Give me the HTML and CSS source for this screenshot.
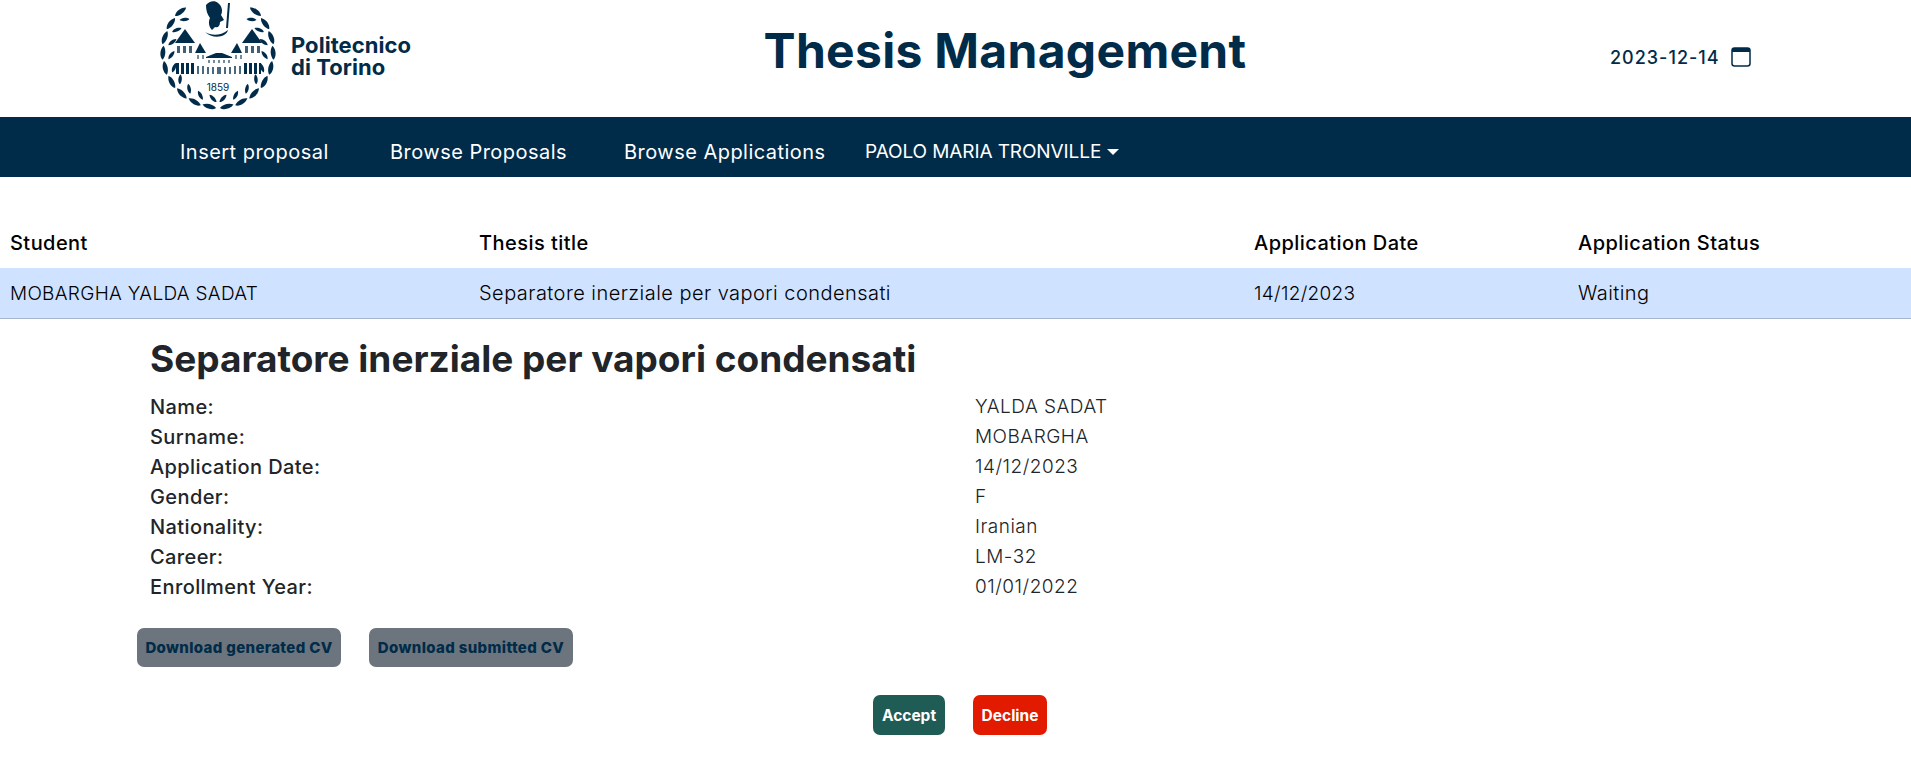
FILE: index.html
```html
<!DOCTYPE html>
<html><head><meta charset="utf-8"><title>Thesis Management</title>
<link rel="stylesheet" href="styles.css">
</head><body>
<header class="top">
   <div class="logo">
      <svg class="crest" width="120" height="112" viewBox="0 0 120 112">
         <defs>
            <path id="leaf" d="M0 0C3-3 10-4 14-1C10 3 3 3 0 0Z"/>
            <g id="right">
               <use href="#leaf" transform="translate(56 108) rotate(-6)"/>
               <use href="#leaf" transform="translate(56 102) rotate(-38) scale(.72)"/>
            </g>
            <g id="left" transform="translate(116 0) scale(-1 1)"><use href="#right"/></g>
         </defs>
         <g class="ink">
            <use href="#right" transform="rotate(-4 58 52)"/>
            <use href="#right" transform="rotate(-20 58 52)"/>
            <use href="#right" transform="rotate(-36 58 52)"/>
            <use href="#right" transform="rotate(-52 58 52)"/>
            <use href="#right" transform="rotate(-68 58 52)"/>
            <use href="#right" transform="rotate(-84 58 52)"/>
            <use href="#right" transform="rotate(-100 58 52)"/>
            <use href="#right" transform="rotate(-116 58 52)"/>
            <use href="#right" transform="rotate(-132 58 52)"/>
            <use href="#left" transform="rotate(4 58 52)"/>
            <use href="#left" transform="rotate(20 58 52)"/>
            <use href="#left" transform="rotate(36 58 52)"/>
            <use href="#left" transform="rotate(52 58 52)"/>
            <use href="#left" transform="rotate(68 58 52)"/>
            <use href="#left" transform="rotate(84 58 52)"/>
            <use href="#left" transform="rotate(100 58 52)"/>
            <use href="#left" transform="rotate(116 58 52)"/>
            <use href="#left" transform="rotate(132 58 52)"/>
            <!-- head and helmet -->
            <path d="M46 5C49 1 55 0 58 3C62 6 63 11 61 15L64 20L60 22C60 26 58 28 55 27L52 30C49 27 48 22 50 18C47 14 46 10 46 5Z"/>
            <path d="M68 3L70 3L68 28L66 28Z"/>
            <path d="M45 32C52 36 60 36 68 30C66 38 52 39 45 32Z"/>
            <!-- towers -->
            <path d="M15 43L25 29L35 43Z"/>
            <path d="M82 43L92 29L102 43Z"/>
            <path d="M35 53L40 43L46 53Z"/>
            <path d="M71 53L77 43L82 53Z"/>
            <path d="M46 57L56 53H62L72 57V58H46Z"/>
            <!-- windows -->
            <path d="M17 46h3v7h-3zM23 46h3v7h-3zM29 46h3v7h-3zM85 46h3v7h-3zM91 46h3v7h-3zM97 46h3v7h-3z" opacity=".75"/>
            <path d="M37 55h2v4h-2zM42 55h2v4h-2zM75 55h2v4h-2zM80 55h2v4h-2zM48 60h2v3h-2zM53 60h2v3h-2zM58 60h2v3h-2zM63 60h2v3h-2zM68 60h2v3h-2z" opacity=".55"/>
            <!-- ground floor columns -->
            <path d="M16 63h3v11h-3zM21 63h3v11h-3zM26 63h3v11h-3zM31 63h3v11h-3zM84 63h3v11h-3zM89 63h3v11h-3zM94 63h3v11h-3zM99 63h2v11h-2z"/>
            <path d="M37 66h2v8h-2zM42 66h2v8h-2zM47 67h2v7h-2zM52 67h2v7h-2zM57 67h4v7h-4zM64 67h2v7h-2zM69 67h2v7h-2zM74 66h2v8h-2zM79 66h2v8h-2z" opacity=".7"/>
         </g>
         <text class="year" x="58" y="91">1859</text>
      </svg>
      <div class="wordmark">Politecnico<br>di Torino</div>
   </div>
   <h1 class="title">Thesis Management</h1>
   <div class="today">
      <span>2023-12-14</span>
      <svg width="20" height="20" viewBox="0 0 20 20">
         <rect x="1" y="1" width="18" height="18" rx="2.5" class="cal-line"/>
         <path d="M1 5V3.5A2.5 2.5 0 0 1 3.500 1h13A2.500 2.500 0 0 1 19 3.500V5Z" class="ink"/>
      </svg>
   </div>
</header>
<nav class="bar">
   <a class="item first">Insert proposal</a>
   <a class="item second">Browse Proposals</a>
   <a class="item third">Browse Applications</a>
   <a class="item user">PAOLO MARIA TRONVILLE<i class="caret"></i></a>
</nav>
<table class="apps">
   <colgroup><col class="c1"><col class="c2"><col class="c3"><col></colgroup>
   <thead><tr><th>Student</th><th>Thesis title</th><th>Application Date</th><th>Application Status</th></tr></thead>
   <tbody><tr><td class="caps">MOBARGHA YALDA SADAT</td><td>Separatore inerziale per vapori condensati</td><td class="caps">14/12/2023</td><td>Waiting</td></tr></tbody>
</table>
<section class="detail">
   <h2>Separatore inerziale per vapori condensati</h2>
   <dl class="facts">
      <dt>Name:</dt><dd>YALDA SADAT</dd>
      <dt>Surname:</dt><dd>MOBARGHA</dd>
      <dt>Application Date:</dt><dd>14/12/2023</dd>
      <dt>Gender:</dt><dd>F</dd>
      <dt>Nationality:</dt><dd>Iranian</dd>
      <dt>Career:</dt><dd>LM-32</dd>
      <dt>Enrollment Year:</dt><dd>01/01/2022</dd>
   </dl>
</section>
<div class="downloads">
   <button class="btn grey">Download generated CV</button>
   <button class="btn grey">Download submitted CV</button>
</div>
<div class="actions">
   <button class="btn accept">Accept</button>
   <button class="btn decline">Decline</button>
</div>
</body></html>
```
FILE: styles.css
```css
body
{
	margin: 0;
	font-family: Inter, "Open Sans", sans-serif;
	color: #212529;
	background-color: #fff;
}
.top
{
	display: grid;
	grid-template-columns: 410px 1190px 1fr;
	align-items: center;
	height: 117px;
	color: #002b49;
}
.logo { display: flex; align-items: center; padding-left: 160px; height: 117px; }
.crest { flex: none; margin-top: -5px; }
.ink { fill: #002b49; }
.year { fill: #002b49; font-size: 10px; text-anchor: middle; }
.wordmark
{
	margin: -6px 0 0 11px;
	font-size: 22px;
	line-height: 22px;
	font-weight: 700;
	letter-spacing: .05px;
}
.title { margin: 0 0 16px; text-align: center; font-size: 48px; font-weight: 700; letter-spacing: .3px; }
.today { display: flex; align-items: center; gap: 11px; padding: 0 0 3px 10px; font-size: 18px; font-weight: 500; letter-spacing: 1px; }
.cal-line { fill: none; stroke: #002b49; stroke-width: 1.5; }
.bar
{
	display: flex;
	align-items: center;
	height: 51px;
	padding: 9px 0 0 180px;
	color: #fff;
	background-color: #002b49;
	font-size: 20px;
	letter-spacing: .47px;
}
.item { white-space: nowrap; }
.first { width: 210px; }
.second { width: 234px; }
.third { width: 241px; }
.user { font-size: 19px; letter-spacing: -.1px; }
.caret
{
	display: inline-block;
	margin-left: 6px;
	vertical-align: 3px;
	border-top: 6px solid #fff;
	border-left: 6px solid transparent;
	border-right: 6px solid transparent;
}
.apps
{
	width: 100%;
	margin-top: 40px;
	border-collapse: collapse;
	table-layout: fixed;
	font-size: 20px;
	letter-spacing: .45px;
}
.c1 { width: 469px; }
.c2 { width: 775px; }
.c3 { width: 324px; }
.apps th
{
	height: 51px;
	padding: 0 10px;
	text-align: left;
	font-weight: 500;
	color: #000;
}
.apps td
{
	height: 50px;
	padding: 0 10px;
	color: #000;
	background-color: #cfe2ff;
	border-bottom: 1px solid #a6b5cc;
	font-weight: 300;
}
.apps .caps { font-size: 19px; letter-spacing: .3px; }
.detail { padding: 16px 0 0 150px; }
.detail h2 { margin: 0 0 9px; font-size: 37px; line-height: 48px; font-weight: 700; }
.facts
{
	display: grid;
	grid-template-columns: 825px 1fr;
	margin: 0;
	font-size: 19px;
	line-height: 30px;
}
.facts dt { font-size: 20px; font-weight: 500; letter-spacing: .4px; }
.facts dd { margin: 0; font-weight: 300; letter-spacing: .5px; }
.btn
{
	border: 0;
	border-radius: 7px;
	font-family: inherit;
	font-weight: 700;
	font-size: 15.5px;
	color: #fff;
}
.downloads { display: flex; gap: 28px; padding: 26px 0 0 137px; }
.grey { width: 204px; height: 39px; color: #002b49; background-color: #6c757d; font-size: 15px; letter-spacing: .35px; font-weight: 800; }
.actions { display: flex; gap: 28px; padding: 28px 0 0 873px; }
.accept { width: 72px; height: 40px; background-color: #1f5c55; }
.decline { width: 74px; height: 40px; background-color: #e11a00; }
```
